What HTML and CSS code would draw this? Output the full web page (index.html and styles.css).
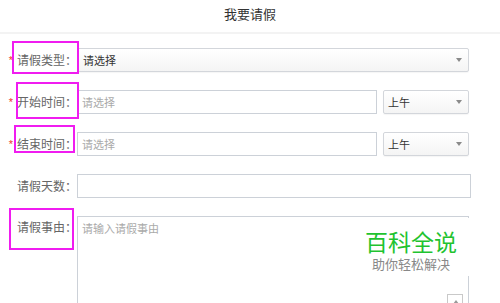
FILE: index.html
```html
<!DOCTYPE html>
<html lang="zh">
<head>
<meta charset="utf-8">
<title>我要请假</title>
<link rel="stylesheet" href="styles.css">
</head>
<body>
<header class="topbar">我要请假</header>
<form class="form">
  <div class="row">
    <label class="label"><span class="req">*</span>请假类型：</label>
    <div class="select wide"><span class="val">请选择</span><i class="caret"></i></div>
  </div>
  <div class="row">
    <label class="label"><span class="req">*</span>开始时间：</label>
    <input class="input date" placeholder="请选择">
    <div class="select half"><span class="val">上午</span><i class="caret"></i></div>
  </div>
  <div class="row">
    <label class="label"><span class="req">*</span>结束时间：</label>
    <input class="input date" placeholder="请选择">
    <div class="select half"><span class="val">上午</span><i class="caret"></i></div>
  </div>
  <div class="row">
    <label class="label">请假天数：</label>
    <input class="input days">
  </div>
  <div class="row area-row">
    <label class="label">请假事由：</label>
    <div class="area-wrap">
      <textarea class="area" placeholder="请输入请假事由"></textarea>
      <span class="handle"><i></i></span>
    </div>
  </div>
</form>
<div class="mark m1"></div>
<div class="mark m2"></div>
<div class="mark m3"></div>
<div class="mark m5"></div>
<div class="logo">
  <div class="logo-main">百科全说</div>
  <div class="logo-sub">助你轻松解决</div>
</div>
</body>
</html>
```
FILE: styles.css
```css
* { box-sizing: border-box; }
html, body { margin: 0; padding: 0; background: #fff; overflow: hidden; }
body {
  width: 500px; height: 303px; position: relative;
  font-family: "Noto Sans CJK SC", "Noto Sans", sans-serif;
  color: #333;
}
.topbar {
  height: 34px; line-height: 28px; text-align: center;
  font-size: 13px; color: #333;
  border-bottom: 2px solid #f3f3f3;
}
.form { padding: 14px 31px 0 0; }
.row { display: flex; align-items: center; height: 24px; margin-bottom: 18px; }
.label {
  width: 77px; flex: none; text-align: right;
  font-size: 12px; color: #666; line-height: 24px; white-space: nowrap;
}
.req {
  color: #f0342e; font-size: 11px; margin-right: 4px;
  font-family: "Liberation Sans", sans-serif; position: relative; top: -1px;
}
.input, .select {
  height: 24px; border: 1px solid #ccd1d8; background: #fff;
  font-family: inherit; font-size: 11px; color: #333;
  padding: 0 4px; outline: none;
}
.input::placeholder { color: #aaa; }
.select {
  display: flex; align-items: center; justify-content: space-between;
  border-radius: 2px; background: linear-gradient(#fff, #f4f4f4);
  border-color: #d3d6db; padding: 0 6px 0 5px;
  box-shadow: 0 1px 1px rgba(0,0,0,0.04);
}
.wide { flex: 1; }
.date { width: 300px; }
.half { width: 86px; margin-left: 6px; padding-left: 4px; }
.days { flex: 1; margin-right: -2px; }
.caret {
  width: 0; height: 0;
  border-left: 3px solid transparent; border-right: 3px solid transparent;
  border-top: 4px solid #8a8a8a;
}
.area-row { align-items: flex-start; height: auto; }
.area-row .label { line-height: 22px; }
.area-wrap { flex: 1; position: relative; }
.area {
  display: block; width: 100%; height: 100px; resize: none;
  border: 1px solid #ccd1d8; font-family: inherit; font-size: 11px;
  padding: 3px 4px; outline: none;
}
.area::placeholder { color: #aaa; }
.handle {
  position: absolute; left: 370px; top: 78px;
  width: 16px; height: 14px; border: 1px solid #c9c9c9; background: #fff;
}
.handle i {
  position: absolute; right: 3px; top: 5px; width: 0; height: 0;
  border-left: 3px solid transparent; border-right: 3px solid transparent;
  border-bottom: 4px solid #999;
}
.mark { position: absolute; border: 2px solid #f01cf0; }
.m1 { left: 12px; top: 41px; width: 67px; height: 33px; }
.m2 { left: 16px; top: 82px; width: 63px; height: 37px; }
.m3 { left: 14px; top: 125px; width: 61px; height: 28px; }
.m5 { left: 9px; top: 208px; width: 65px; height: 42px; }
.logo {
  position: absolute; left: 350px; top: 218px; width: 122px; height: 58px;
  background: #fff; text-align: center; padding-top: 12px;
}
.logo-main { font-size: 23px; line-height: 23px; color: #1fc330; }
.logo-sub { font-size: 13px; line-height: 14px; color: #888; margin-top: 4px; }
```
